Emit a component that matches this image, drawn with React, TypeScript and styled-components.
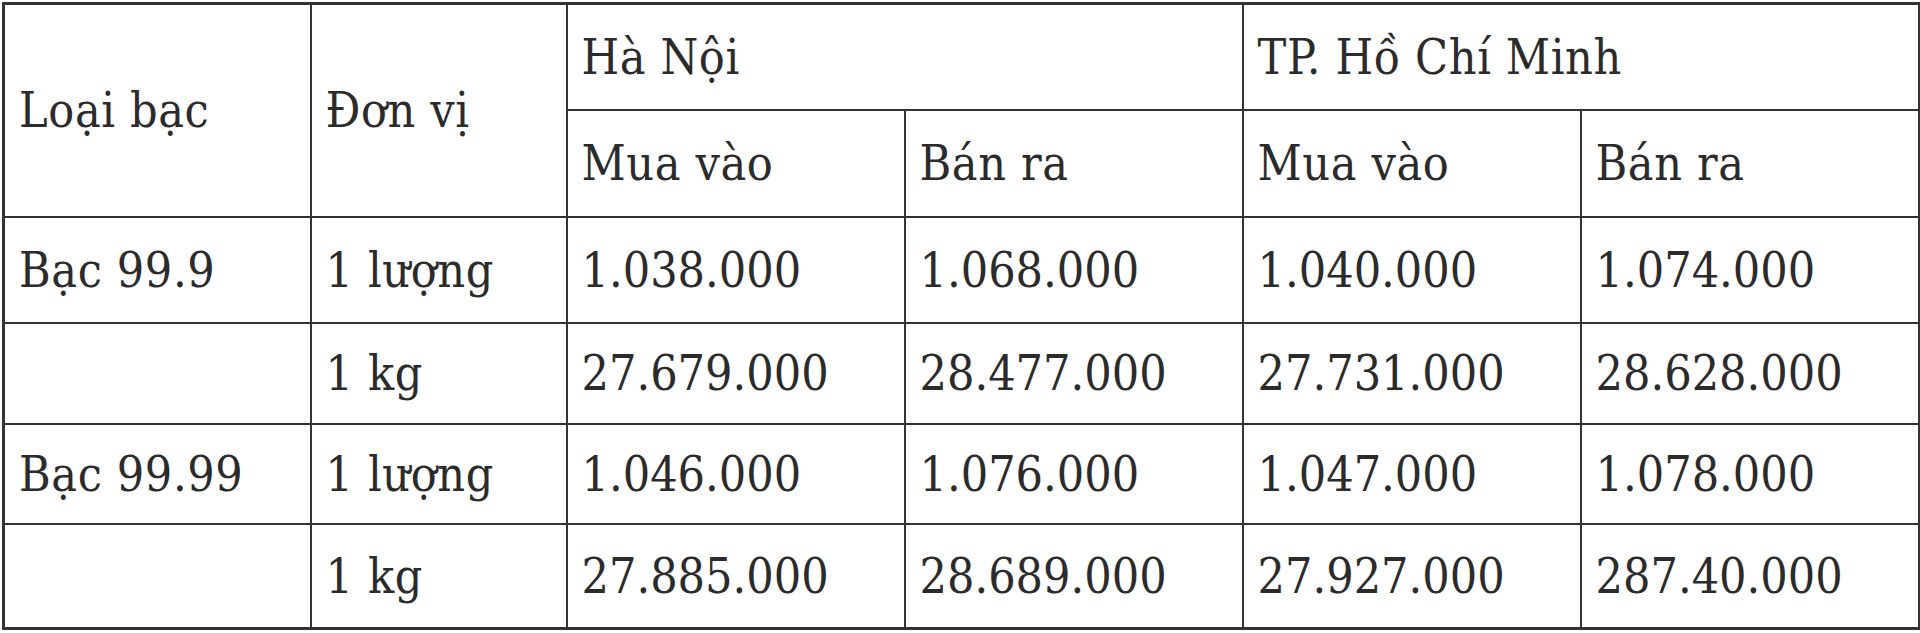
import React from "react";
import styled, { createGlobalStyle } from "styled-components";

const Global = createGlobalStyle`
  html, body { margin: 0; padding: 0; background: #fff; }
  body { font-family: "DejaVu Serif Condensed", "DejaVu Serif", "Liberation Serif", serif; }
`;

const Page = styled.div`
  padding: 2px 2px 0 2px;
`;

const Table = styled.table`
  width: 1916px;
  border-collapse: collapse;
  table-layout: fixed;
  border: 3px solid #333;
  color: #2b2b2b;
  font-family: "DejaVu Serif Condensed", "DejaVu Serif", serif;
  font-stretch: condensed;
  font-size: 48px;
  line-height: 1.2;
`;

const Row = styled.tr<{ $h: number }>`
  height: ${(p) => p.$h}px;
`;

const Cell = styled.td<{ $text?: boolean }>`
  border: 2px solid #333;
  padding: 2px 14px 0 14px;
  vertical-align: middle;
  text-align: left;
  font-weight: normal;
  white-space: nowrap;
  letter-spacing: ${(p) => (p.$text ? "0.6px" : "0")};
`;

const Col = styled.col<{ $w: number }>`
  width: ${(p) => p.$w}px;
`;

const rows = [
  { type: "Bạc 99.9", unit: "1 lượng", h: 106, v: ["1.038.000", "1.068.000", "1.040.000", "1.074.000"] },
  { type: "", unit: "1 kg", h: 101, v: ["27.679.000", "28.477.000", "27.731.000", "28.628.000"] },
  { type: "Bạc 99.99", unit: "1 lượng", h: 100, v: ["1.046.000", "1.076.000", "1.047.000", "1.078.000"] },
  { type: "", unit: "1 kg", h: 105, v: ["27.885.000", "28.689.000", "27.927.000", "287.40.000"] },
];

export default function App() {
  return (
    <Page>
      <Global />
      <Table>
        <colgroup>
          <Col $w={307} />
          <Col $w={256} />
          <Col $w={338} />
          <Col $w={338} />
          <Col $w={338} />
          <Col $w={339} />
        </colgroup>
        <tbody>
          <Row $h={106}>
            <Cell $text rowSpan={2}>Loại bạc</Cell>
            <Cell $text rowSpan={2}>Đơn vị</Cell>
            <Cell $text colSpan={2}>Hà Nội</Cell>
            <Cell $text colSpan={2}>TP. Hồ Chí Minh</Cell>
          </Row>
          <Row $h={107}>
            <Cell $text>Mua vào</Cell>
            <Cell $text>Bán ra</Cell>
            <Cell $text>Mua vào</Cell>
            <Cell $text>Bán ra</Cell>
          </Row>
          {rows.map((r, i) => (
            <Row $h={r.h} key={i}>
              <Cell $text>{r.type}</Cell>
              <Cell $text>{r.unit}</Cell>
              {r.v.map((x, j) => (
                <Cell key={j}>{x}</Cell>
              ))}
            </Row>
          ))}
        </tbody>
      </Table>
    </Page>
  );
}
